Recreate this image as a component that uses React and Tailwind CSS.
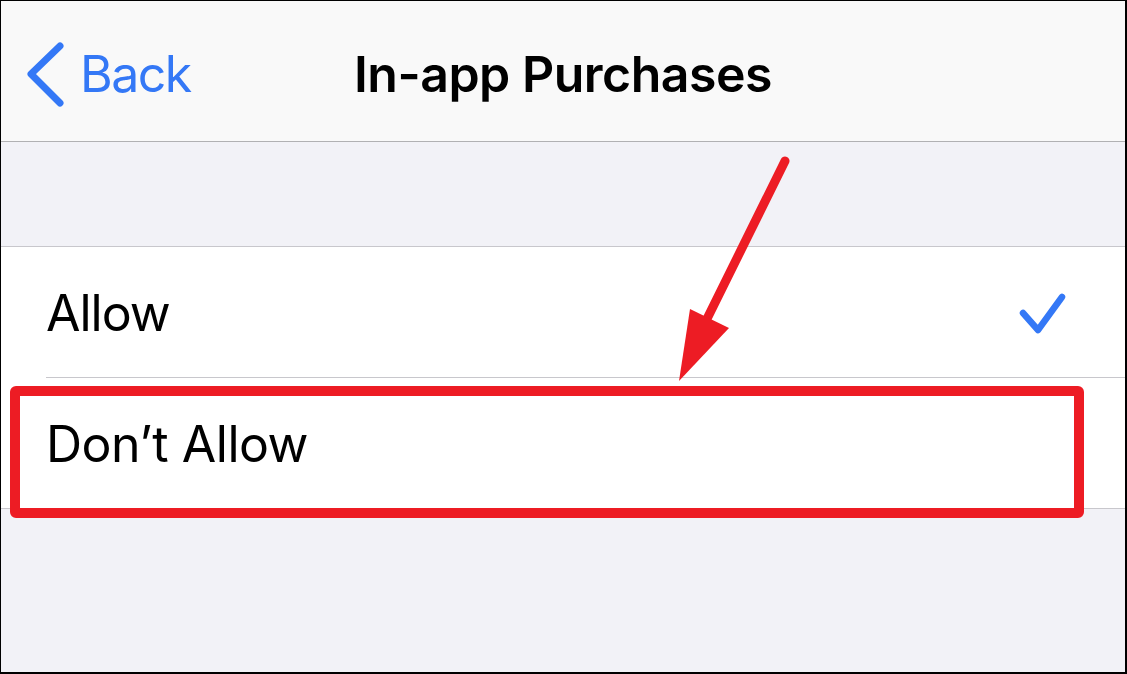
export default function App() {
  return (
    <div
      className="relative w-[1127px] h-[674px] overflow-hidden border-l border-t border-r-2 border-b-2 border-black bg-[#f2f2f7] flex flex-col"
      style={{ fontFamily: "Inter, 'Noto Sans', sans-serif" }}
    >
      {/* Nav bar */}
      <div className="h-[141px] shrink-0 bg-[#f9f9f9] border-b border-[#b1b1b3] relative flex items-center justify-center pt-[7px]">
        <div className="absolute left-[26px] top-0 h-full pt-[7px] flex items-center">
          <svg width="40" height="66" viewBox="0 0 40 66" className="mr-[13px]">
            <path
              d="M33 4 L4 32 L33 61"
              fill="none"
              stroke="#3478f6"
              strokeWidth="7"
              strokeLinecap="round"
              strokeLinejoin="round"
            />
          </svg>
          <span className="text-[50px] text-[#3478f6] tracking-[-1.5px]">Back</span>
        </div>
        <h1 className="text-[50px] font-semibold text-black tracking-[-0.5px]">
          In-app Purchases
        </h1>
      </div>

      {/* Spacer section */}
      <div className="h-[105px] shrink-0 border-b border-[#c8c7cc]" />

      {/* Options */}
      <div className="bg-white border-b border-[#c8c7cc] shrink-0">
        <div className="ml-[45px] h-[131px] border-b border-[#c8c7cc] flex items-center justify-between pr-[58px] pt-[3px]">
          <span className="text-[50px] text-black tracking-[-1px]">Allow</span>
          <svg width="48" height="44" viewBox="0 0 48 44">
            <path
              d="M4 21 L19 38 L43 5"
              fill="none"
              stroke="#3478f6"
              strokeWidth="6.5"
              strokeLinecap="round"
              strokeLinejoin="round"
            />
          </svg>
        </div>
        <div className="ml-[45px] h-[130px] flex items-center pt-[3px]">
          <span className="text-[50px] text-black tracking-[-0.5px]">Don’t Allow</span>
        </div>
      </div>

      {/* Annotation: highlight box */}
      <div className="absolute left-[9px] top-[385px] w-[1074px] h-[132px] border-[10px] border-[#ed1c24] rounded-[6px]" />

      {/* Annotation: arrow */}
      <svg className="absolute left-0 top-0" width="1127" height="674" viewBox="0 0 1127 674">
        <line
          x1="784"
          y1="160"
          x2="700"
          y2="330"
          stroke="#ed1c24"
          strokeWidth="9"
          strokeLinecap="round"
        />
        <polygon points="678,380 689,308 728,327" fill="#ed1c24" />
      </svg>
    </div>
  );
}
